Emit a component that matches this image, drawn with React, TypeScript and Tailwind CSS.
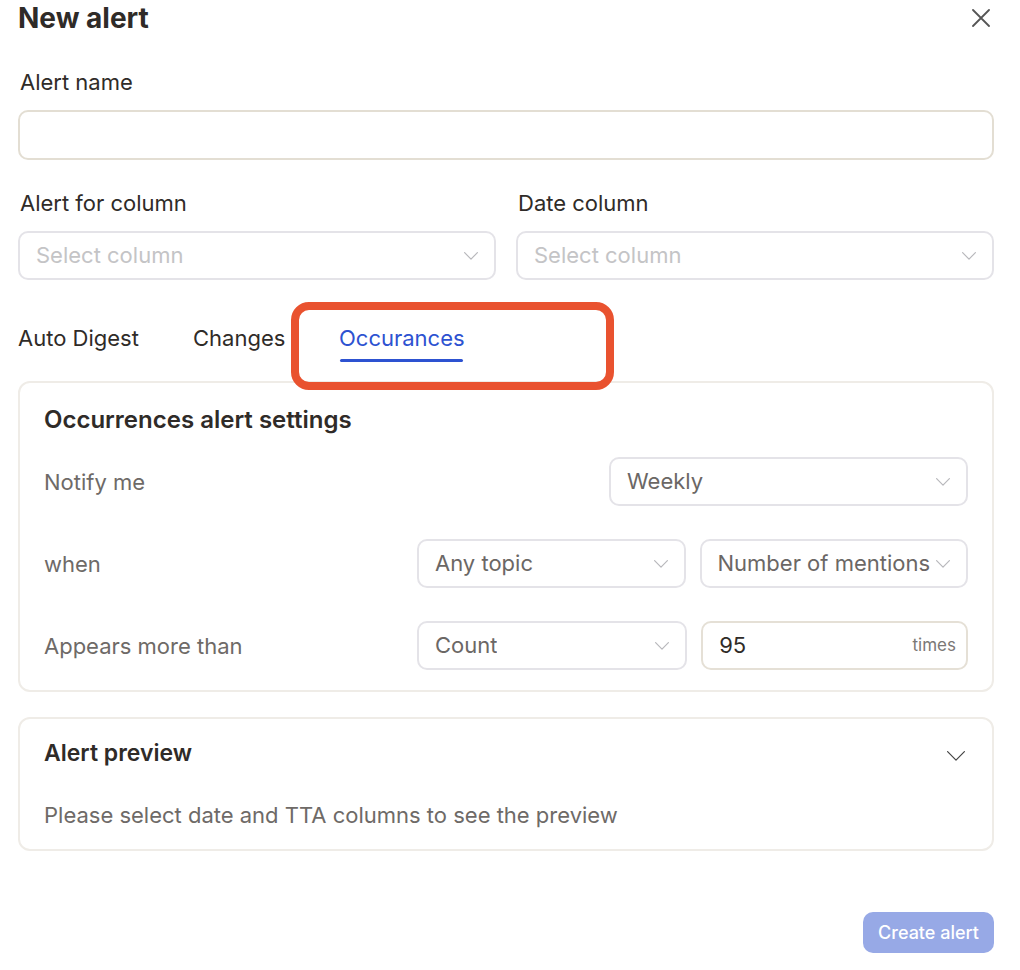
function Chevron({ w = 14, h = 8, className = "" }: { w?: number; h?: number; className?: string }) {
  return (
    <svg width={w} height={h} viewBox={`0 0 ${w} ${h}`} fill="none" className={className}>
      <polyline
        points={`0.6,0.6 ${w / 2},${h - 0.8} ${w - 0.6},0.6`}
        stroke="currentColor"
        strokeWidth={1.2}
        strokeLinecap="round"
        strokeLinejoin="round"
      />
    </svg>
  );
}

function Select({ value, placeholder }: { value?: string; placeholder?: string }) {
  return (
    <div className="flex h-[49px] w-full items-center justify-between rounded-[10px] border-2 border-[#e4e3e8] bg-white pl-[16px] pr-[16px]">
      <span className={`truncate text-[22px] ${value ? "text-[#6b6765]" : "text-[#c4c4c6]"}`}>
        {value ?? placeholder}
      </span>
      <Chevron className="ml-1 shrink-0 text-[#b8b8bc]" />
    </div>
  );
}

function Row({ label, children }: { label: string; children: React.ReactNode }) {
  return (
    <div className="flex items-center justify-between">
      <span className="text-[22px] leading-[28px] text-[#6e6a67]">{label}</span>
      {children}
    </div>
  );
}

export default function App() {
  return (
    <div
      className="relative min-h-[970px] w-[1020px] bg-white pl-[18px] pr-[26px] text-[#2f2b28]"
      style={{ fontFamily: "Inter, 'Noto Sans', sans-serif" }}
    >
      {/* header */}
      <div className="flex h-[36px] items-center justify-between">
        <h1 className="text-[28px] font-bold leading-[36px]">New alert</h1>
        <svg width="18" height="18" viewBox="0 0 18 18" className="mr-[4px] text-[#555]">
          <path d="M1 1L17 17M17 1L1 17" stroke="currentColor" strokeWidth={1.8} strokeLinecap="round" />
        </svg>
      </div>

      <label className="mt-[32px] ml-[2px] block text-[22px] leading-[28px]">Alert name</label>
      <input className="mt-[14px] block h-[50px] w-full rounded-[10px] border-2 border-[#e3ded3] px-4 text-[22px] outline-none" />

      <div className="mt-[29px] grid grid-cols-2 gap-[20px]">
        <div>
          <div className="ml-[2px] text-[22px] leading-[28px]">Alert for column</div>
          <div className="mt-[14px]">
            <Select placeholder="Select column" />
          </div>
        </div>
        <div>
          <div className="ml-[2px] text-[22px] leading-[28px]">Date column</div>
          <div className="mt-[14px]">
            <Select placeholder="Select column" />
          </div>
        </div>
      </div>

      {/* tabs */}
      <div className="mt-[44px] flex text-[22px] leading-[28px]">
        <div className="w-[175px]">Auto Digest</div>
        <div className="w-[146px]">Changes</div>
        <div className="flex flex-col">
          <span className="text-[#2d52d1]">Occurances</span>
          <span className="mt-[7px] ml-[1px] h-[3px] w-[123px] rounded-full bg-[#2d52d1]" />
        </div>
      </div>

      {/* settings card */}
      <div className="mt-[19px] rounded-[12px] border-2 border-[#efece7] px-[24px] pt-[23px] pb-[20px]">
        <div className="text-[24px] font-semibold leading-[28px]">Occurrences alert settings</div>
        <div className="mt-[23px] flex flex-col gap-[33px]">
          <Row label="Notify me">
            <div className="w-[359px]">
              <Select value="Weekly" />
            </div>
          </Row>
          <Row label="when">
            <div className="flex w-[551px] gap-[14px]">
              <Select value="Any topic" />
              <Select value="Number of mentions" />
            </div>
          </Row>
          <Row label="Appears more than">
            <div className="flex w-[551px] gap-[14px]">
              <Select value="Count" />
              <div className="flex h-[49px] w-full items-center justify-between rounded-[10px] border-2 border-[#e5e0d6] pl-[16px] pr-[10px]">
                <span className="text-[22px] text-[#2f2b28]">95</span>
                <span className="text-[17px] text-[#7b7876]">times</span>
              </div>
            </div>
          </Row>
        </div>
      </div>

      {/* preview card */}
      <div className="mt-[25px] rounded-[12px] border-2 border-[#efece7] px-[24px] pt-[20px] pb-[20px]">
        <div className="flex items-center justify-between">
          <span className="text-[23px] font-semibold leading-[28px]">Alert preview</span>
          <Chevron w={18} h={10} className="mt-[6px] mr-[3px] text-[#444]" />
        </div>
        <div className="mt-[34px] text-[22px] leading-[28px] text-[#6e6a67]">
          Please select date and TTA columns to see the preview
        </div>
      </div>

      <div className="mt-[61px] flex justify-end">
        <button className="h-[41px] w-[131px] rounded-[10px] bg-[#97a9e6] text-[18px] font-medium text-white">
          Create alert
        </button>
      </div>

      {/* annotation */}
      <div className="pointer-events-none absolute left-[291px] top-[302px] h-[88px] w-[323px] rounded-[18px] border-[8px] border-[#e9522f]" />
    </div>
  );
}
